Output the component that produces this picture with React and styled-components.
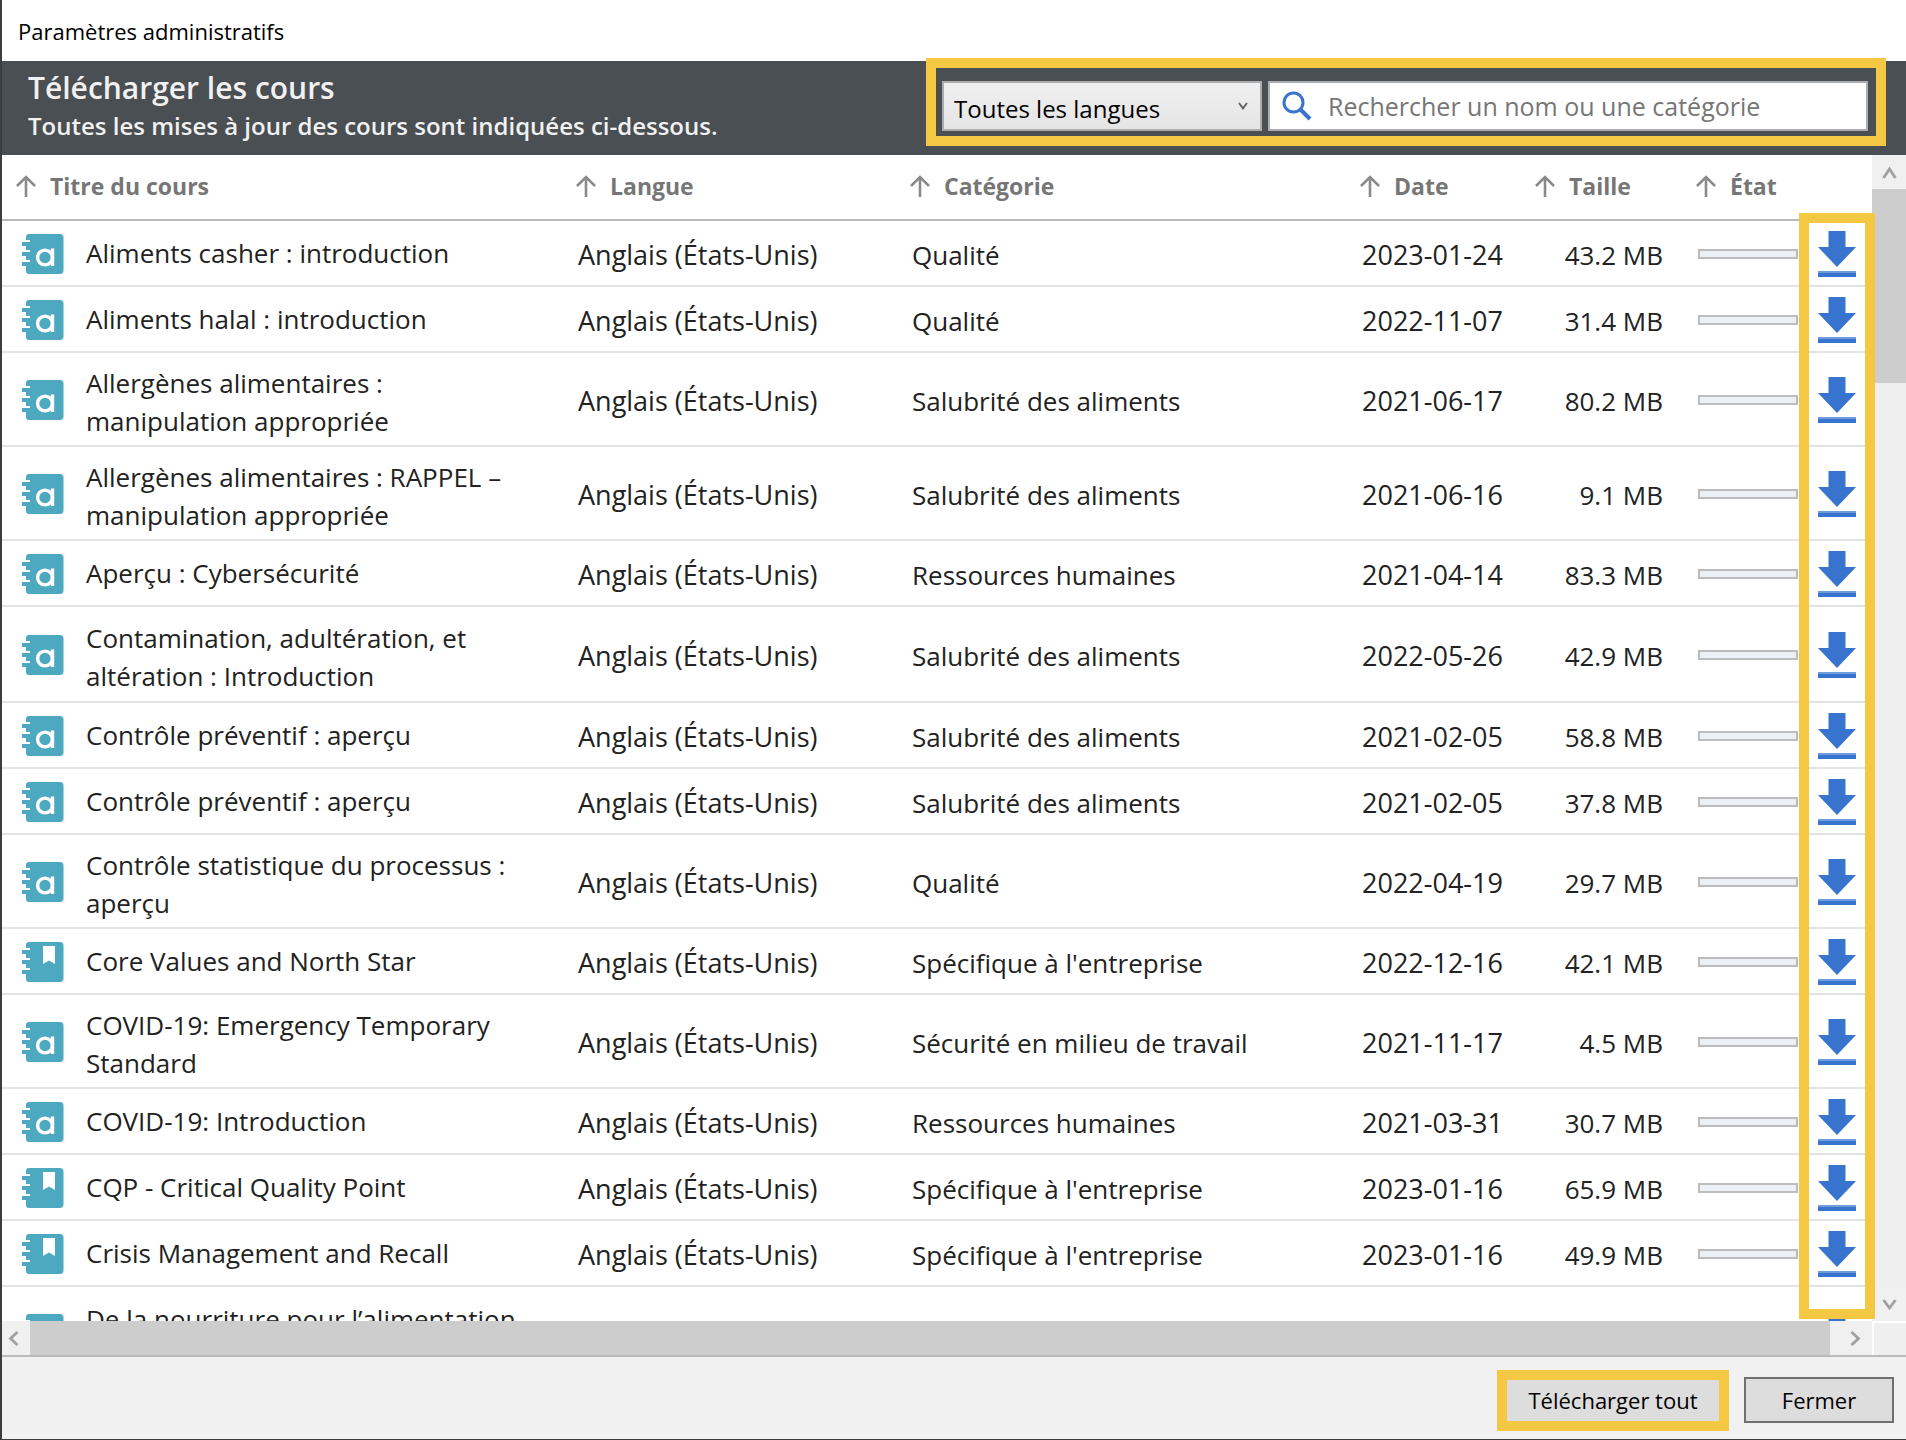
import React from "react";
import styled, { createGlobalStyle } from "styled-components";

const GlobalStyle = createGlobalStyle`
  * { box-sizing: border-box; }
  body { margin: 0; background: #fff; }
  body, button, input, select {
    font-family: "Open Sans", "Noto Sans", sans-serif;
  }
`;

const HIGHLIGHT = "#f4c842";
const BLUE = "#3873cd";
const TEAL = "#4da9bf";

const Window = styled.main`
  display: flex;
  flex-direction: column;
  height: 100vh;
  background: #fff;
  border-left: 2px solid #3c3d40;
  border-bottom: 1px solid #3c3d40;
  overflow: hidden;
`;

const TitleBar = styled.div`
  flex: none;
  height: 61px;
  padding-left: 16px;
  font-size: 22px;
  line-height: 62px;
  color: #000;
`;

const Banner = styled.header`
  flex: none;
  display: flex;
  align-items: center;
  justify-content: space-between;
  height: 94px;
  padding: 0 20px 0 26px;
  background: #4a4f53;
  color: #f1f1f1;
`;

const Heading = styled.h1`
  margin: 0;
  font-size: 30px;
  line-height: 42px;
  font-weight: 600;
`;

const Subheading = styled.p`
  margin: 0;
  padding-bottom: 6px;
  font-size: 24px;
  line-height: 34px;
  font-weight: 600;
`;

const Filters = styled.form`
  display: flex;
  gap: 6px;
  width: 960px;
  height: 88px;
  margin-bottom: 12px;
  padding: 13px 8px 5px 6px;
  border: 10px solid ${HIGHLIGHT};
`;

const SelectBox = styled.div`
  display: flex;
  align-items: center;
  width: 320px;
  height: 50px;
  padding-right: 12px;
  border: 2px solid #acacac;
  background: linear-gradient(#f0f0f0, #e5e5e5);
`;

const Select = styled.select`
  flex: 1;
  min-width: 0;
  height: 46px;
  padding: 4px 0 0 10px;
  border: 0;
  background: transparent;
  appearance: none;
  font-size: 24px;
  color: #000;
`;

const SearchBox = styled.div`
  flex: 1;
  display: flex;
  align-items: center;
  gap: 16px;
  height: 50px;
  padding-left: 12px;
  border: 2px solid #abadb3;
  background: #fff;
`;

const SearchInput = styled.input`
  flex: 1;
  min-width: 0;
  height: 46px;
  padding: 0;
  border: 0;
  outline: 0;
  background: transparent;
  font-size: 25px;
  &::placeholder { color: #767676; opacity: 1; }
`;

const ListArea = styled.section`
  position: relative;
  flex: 1;
  min-height: 0;
  display: flex;
`;

const Viewport = styled.div`
  flex: 1;
  min-width: 0;
  overflow: hidden;
`;

const Table = styled.table`
  width: 100%;
  table-layout: fixed;
  border-collapse: separate;
  border-spacing: 0;
  color: #222;
  font-size: 26px;
`;

const Col = styled.col`
  width: ${(p) => p.$w};
`;

const Th = styled.th`
  height: 66px;
  padding: 0 0 2px ${(p) => (p.$first ? "14px" : "0")};
  border-bottom: 2px solid #b9b9b9;
  text-align: left;
`;

const SortButton = styled.button`
  display: flex;
  align-items: center;
  gap: 14px;
  padding: 0;
  border: 0;
  background: none;
  font-size: 23px;
  line-height: 34px;
  font-weight: 700;
  color: #767676;
  white-space: nowrap;
`;

const Row = styled.tr`
  height: ${(p) => p.$h}px;
`;

const Td = styled.td`
  padding: ${(p) => (p.$text ? "4px" : "2px")} ${(p) => (p.$right ? "33px" : "0")} 0 2px;
  border-bottom: 2px solid #e3e3e3;
  text-align: ${(p) => (p.$right ? "right" : "left")};
  vertical-align: middle;
  white-space: nowrap;
  font-size: ${(p) => (p.$large ? "27px" : "26px")};
  line-height: 36px;
`;

const CourseCell = styled.div`
  display: flex;
  align-items: center;
  gap: 22px;
  padding-left: 18px;
`;

const CourseTitle = styled.span`
  width: 440px;
  min-height: ${(p) => p.$lines * 38}px;
  padding: ${(p) => (p.$lines > 1 ? "4px 0 0" : "0 0 2px")};
  line-height: 38px;
  white-space: normal;
`;

const Progress = styled.div`
  width: 100px;
  height: 10px;
  border: 2px solid #bcbcbc;
  background: #ecf0f7;
`;

const IconButton = styled.button`
  display: block;
  margin-left: 15px;
  padding: 0;
  border: 0;
  background: none;
  line-height: 0;
`;

const ActionHighlight = styled.div`
  position: absolute;
  top: 58px;
  bottom: 2px;
  right: 31px;
  width: 76px;
  border: 10px solid ${HIGHLIGHT};
  pointer-events: none;
`;

const VScroll = styled.div`
  display: flex;
  flex-direction: column;
  width: 34px;
  background: #efefef;
`;

const HScroll = styled.div`
  flex: none;
  display: flex;
  height: 36px;
  border-bottom: 2px solid #bababa;
  background: #efefef;
`;

const ScrollButton = styled.button`
  flex: none;
  display: flex;
  align-items: center;
  justify-content: center;
  width: ${(p) => p.$w}px;
  height: 34px;
  padding: ${(p) => p.$pad || "0"};
  border: 0;
  background: #f0f0f0;
`;

const VThumb = styled.div`
  height: 194px;
  background: #cdcdcd;
`;

const VTrack = styled.div`
  flex: 1;
`;

const HThumb = styled.div`
  flex: 1;
  background: #cdcdcd;
`;

const Corner = styled.div`
  width: 34px;
  border-top: 2px solid #fff;
  border-left: 2px solid #fff;
`;

const Footer = styled.footer`
  flex: none;
  display: flex;
  align-items: center;
  justify-content: flex-end;
  gap: 15px;
  height: 82px;
  padding: 4px 12px 0 0;
  background: #f1f1f1;
`;

const Highlighted = styled.div`
  padding: 10px;
  background: ${HIGHLIGHT};
`;

const FooterButton = styled.button`
  display: block;
  width: ${(p) => p.$w}px;
  height: ${(p) => p.$h}px;
  padding: 0;
  border: ${(p) => (p.$plain ? "0" : "2px solid #707070")};
  background: #dddddd;
  font-size: 22px;
  color: #000;
`;

const ArrowUp = () => (
  <svg width="20" height="22" viewBox="0 0 20 22" fill="none" stroke="#8a8a8a" strokeWidth="2.6">
    <path d="M10 22V2M1 11L10 2L19 11" />
  </svg>
);

const CHEVRONS = {
  up: "M1 13L7 4L13 13",
  down: "M1 3L7 11L13 3",
  left: "M10 1L3 7.500L10 14",
  right: "M4 1L11 7.500L4 14",
};

const Chevron = ({ dir, size = 15, color = "#a0a0a0" }) => (
  <svg width={size} height={size} viewBox="0 0 14 15" fill="none" stroke={color} strokeWidth="2.800">
    <path d={CHEVRONS[dir]} />
  </svg>
);

const SearchIcon = () => (
  <svg width="30" height="30" viewBox="0 0 30 30" fill="none" stroke={BLUE}>
    <circle cx="11.500" cy="11.500" r="9.500" strokeWidth="3" />
    <path d="M18.500 18.500L28 28" strokeWidth="4" />
  </svg>
);

const NotebookIcon = ({ kind }) => (
  <svg width="42" height="40" viewBox="0 0 42 40">
    <path
      fill={TEAL}
      d="M7 0H38Q41 0 41.500 3V37Q41 40 38 40H7Q4 40 4 37V32H0V28H8V26H4V22H0V18H8V16H4V12H0V8H8V6H4V3Q4 0 7 0Z"
    />
    {kind === "a" ? (
      <g fill="none" stroke="#fff" strokeWidth="3.400">
        <circle cx="23" cy="23.500" r="7.400" />
        <path d="M30.500 14.500V32" />
      </g>
    ) : (
      <path fill="#fff" d="M21 4H33V22L27 18.500L21 22Z" />
    )}
  </svg>
);

const DownloadIcon = () => (
  <svg width="38" height="46" viewBox="0 0 38 46">
    <path fill={BLUE} d="M10.500 0H27.500V16H38L19 36L0 16H10.500Z" />
    <rect y="40" width="38" height="2" fill="#6f9cdd" />
    <rect y="42" width="38" height="4" fill={BLUE} />
  </svg>
);

const COLUMNS = [
  { label: "Titre du cours", width: "auto" },
  { label: "Langue", width: "334px" },
  { label: "Catégorie", width: "450px" },
  { label: "Date", width: "175px" },
  { label: "Taille", width: "161px" },
  { label: "État", width: "105px" },
];

const EN = "Anglais (États-Unis)";
const COURSES = [
  { title: "Aliments casher : introduction", category: "Qualité", date: "2023-01-24", size: "43.2 MB" },
  { title: "Aliments halal : introduction", category: "Qualité", date: "2022-11-07", size: "31.4 MB" },
  { title: "Allergènes alimentaires : manipulation appropriée", category: "Salubrité des aliments", date: "2021-06-17", size: "80.2 MB", height: 94 },
  { title: "Allergènes alimentaires : RAPPEL – manipulation appropriée", category: "Salubrité des aliments", date: "2021-06-16", size: "9.1 MB", height: 94 },
  { title: "Aperçu : Cybersécurité", category: "Ressources humaines", date: "2021-04-14", size: "83.3 MB" },
  { title: "Contamination, adultération, et altération : Introduction", category: "Salubrité des aliments", date: "2022-05-26", size: "42.9 MB", height: 96 },
  { title: "Contrôle préventif : aperçu", category: "Salubrité des aliments", date: "2021-02-05", size: "58.8 MB" },
  { title: "Contrôle préventif : aperçu", category: "Salubrité des aliments", date: "2021-02-05", size: "37.8 MB" },
  { title: "Contrôle statistique du processus : aperçu", category: "Qualité", date: "2022-04-19", size: "29.7 MB", height: 94 },
  { title: "Core Values and North Star", category: "Spécifique à l'entreprise", date: "2022-12-16", size: "42.1 MB", kind: "bookmark" },
  { title: "COVID-19: Emergency Temporary Standard", category: "Sécurité en milieu de travail", date: "2021-11-17", size: "4.5 MB", height: 94 },
  { title: "COVID-19: Introduction", category: "Ressources humaines", date: "2021-03-31", size: "30.7 MB" },
  { title: "CQP - Critical Quality Point", category: "Spécifique à l'entreprise", date: "2023-01-16", size: "65.9 MB", kind: "bookmark" },
  { title: "Crisis Management and Recall", category: "Spécifique à l'entreprise", date: "2023-01-16", size: "49.9 MB", kind: "bookmark" },
  { title: "De la nourriture pour l’alimentation", height: 94 },
];

const CourseRow = ({ course }) => {
  const { title, category, date, size, kind = "a", height = 66 } = course;
  return (
    <Row $h={height}>
      <Td>
        <CourseCell>
          <NotebookIcon kind={kind} />
          <CourseTitle $lines={height > 66 ? 2 : 1}>{title}</CourseTitle>
        </CourseCell>
      </Td>
      <Td $text $large>{category && EN}</Td>
      <Td $text>{category}</Td>
      <Td $text $large>{date}</Td>
      <Td $text $right>{size}</Td>
      <Td>{category && <Progress role="progressbar" aria-valuenow={0} aria-label={title} />}</Td>
      <Td>
        <IconButton type="button" aria-label={`Télécharger ${title}`}>
          <DownloadIcon />
        </IconButton>
      </Td>
    </Row>
  );
};

export default function App() {
  return (
    <Window>
      <GlobalStyle />
      <TitleBar>Paramètres administratifs</TitleBar>
      <Banner>
        <div>
          <Heading>Télécharger les cours</Heading>
          <Subheading>Toutes les mises à jour des cours sont indiquées ci-dessous.</Subheading>
        </div>
        <Filters onSubmit={(e) => e.preventDefault()}>
          <SelectBox>
            <Select aria-label="Langue">
              <option>Toutes les langues</option>
            </Select>
            <Chevron dir="down" size={10} color="#606060" />
          </SelectBox>
          <SearchBox>
            <SearchIcon />
            <SearchInput
              type="text"
              aria-label="Rechercher"
              placeholder="Rechercher un nom ou une catégorie"
            />
          </SearchBox>
        </Filters>
      </Banner>
      <ListArea>
        <Viewport>
          <Table>
            <colgroup>
              {COLUMNS.map((c) => (
                <Col key={c.label} $w={c.width} />
              ))}
              <Col $w="71px" />
            </colgroup>
            <thead>
              <tr>
                {COLUMNS.map((c, i) => (
                  <Th key={c.label} $first={i === 0} scope="col">
                    <SortButton type="button">
                      <ArrowUp />
                      {c.label}
                    </SortButton>
                  </Th>
                ))}
                <Th aria-label="Actions" />
              </tr>
            </thead>
            <tbody>
              {COURSES.map((course, i) => (
                <CourseRow key={i} course={course} />
              ))}
            </tbody>
          </Table>
        </Viewport>
        <VScroll>
          <ScrollButton type="button" $w={34} aria-label="Monter">
            <Chevron dir="up" />
          </ScrollButton>
          <VThumb />
          <VTrack />
          <ScrollButton type="button" $w={34} aria-label="Descendre">
            <Chevron dir="down" />
          </ScrollButton>
        </VScroll>
        <ActionHighlight />
      </ListArea>
      <HScroll>
        <ScrollButton type="button" $w={28} $pad="0 4px 0 0" aria-label="Gauche">
          <Chevron dir="left" />
        </ScrollButton>
        <HThumb />
        <ScrollButton type="button" $w={42} $pad="0 0 0 6px" aria-label="Droite">
          <Chevron dir="right" />
        </ScrollButton>
        <Corner />
      </HScroll>
      <Footer>
        <Highlighted>
          <FooterButton type="button" $plain $w={212} $h={41}>
            Télécharger tout
          </FooterButton>
        </Highlighted>
        <FooterButton type="button" $w={150} $h={46}>
          Fermer
        </FooterButton>
      </Footer>
    </Window>
  );
}
